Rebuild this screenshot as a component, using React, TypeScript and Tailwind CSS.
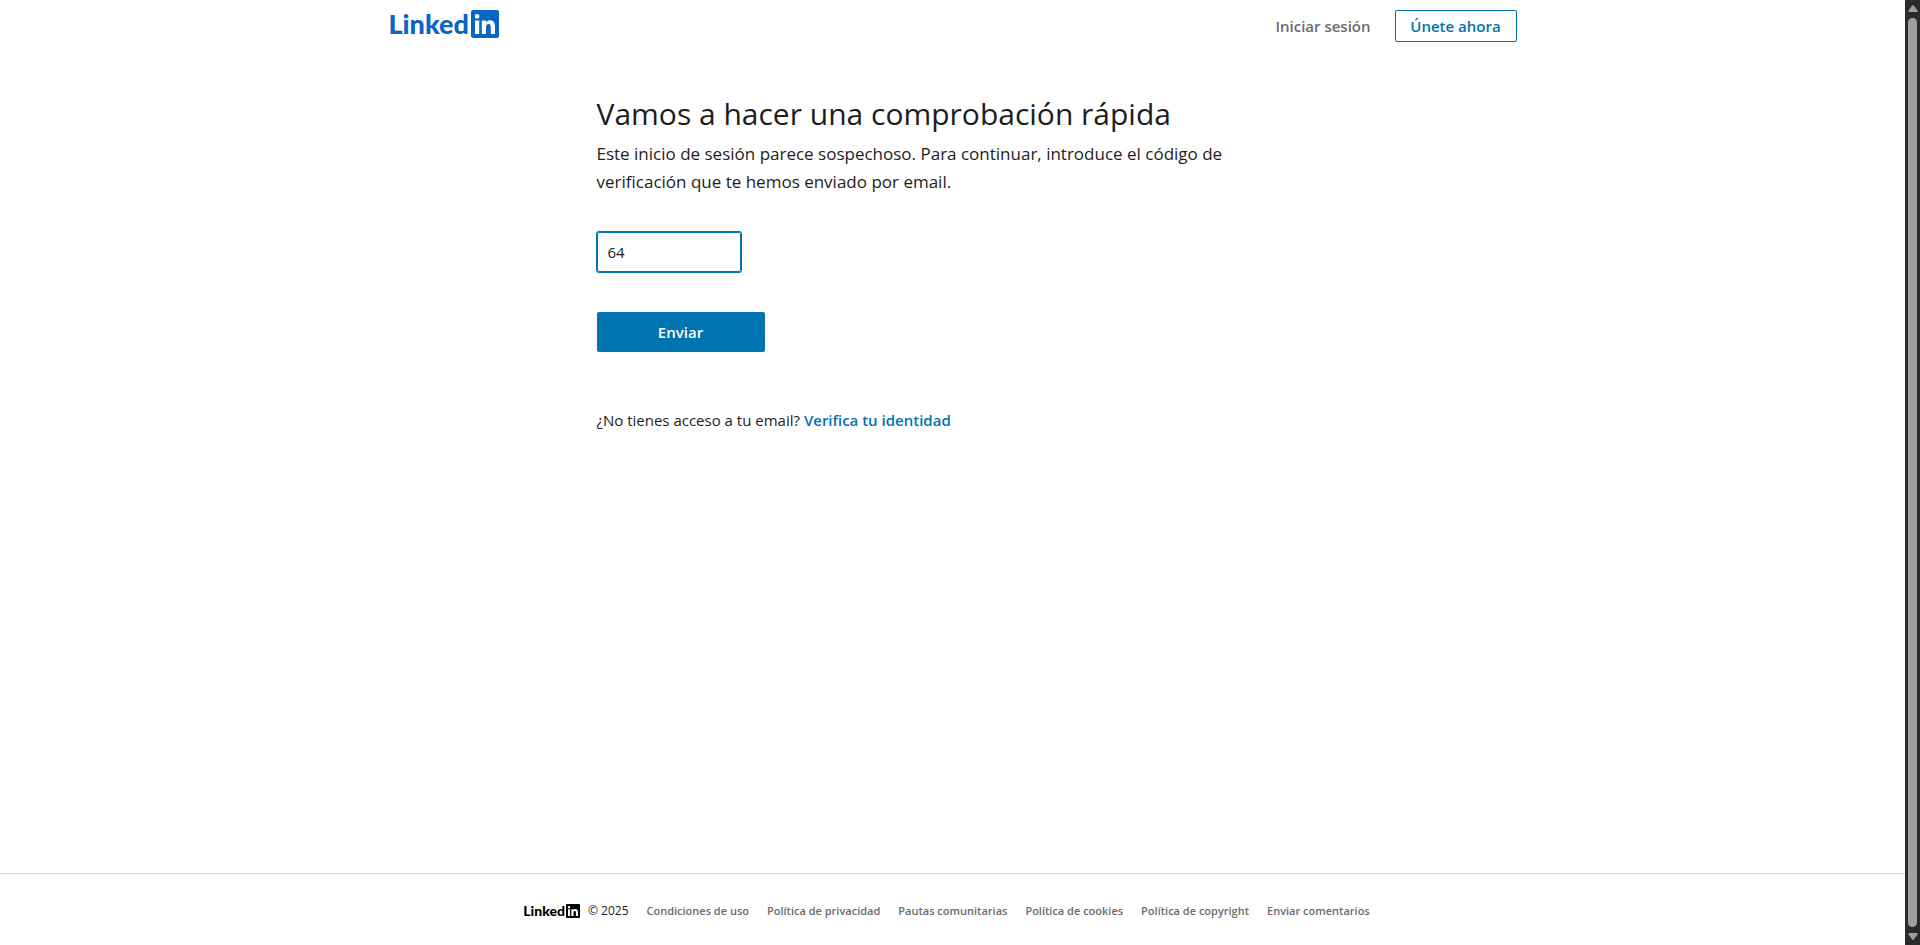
import { useState } from "react";

type LogoProps = { size: "large" | "small" };

function InMark({ className }: { className: string }) {
  return (
    <svg viewBox="0 0 28 28" className={className} aria-hidden="true">
      <path
        fill="currentColor"
        fillRule="evenodd"
        d="M2 0h24a2 2 0 0 1 2 2v24a2 2 0 0 1-2 2H2a2 2 0 0 1-2-2V2a2 2 0 0 1 2-2ZM4 10.5V24h4.2V10.5H4ZM6.1 3.9a2.4 2.4 0 1 0 0 4.8 2.4 2.4 0 0 0 0-4.8ZM10.8 10.5V24H15v-6.8c0-1.9.9-3.1 2.6-3.1 1.6 0 2.2 1.2 2.2 3.1V24H24v-7.7c0-4-2-6.1-5-6.1-2.1 0-3.3 1-4 2.1v-1.8h-4.2Z"
      />
    </svg>
  );
}

function Logo({ size }: LogoProps) {
  return size === "large" ? (
    <a href="#" className="flex h-7 items-center gap-0.5 text-[#0a66c2]">
      <span className="font-[Lato] text-[27px] leading-7 font-black">Linked</span>
      <InMark className="size-7" />
    </a>
  ) : (
    <span className="flex items-center gap-px text-black">
      <span className="font-[Lato] text-[14px] leading-4 font-black">Linked</span>
      <InMark className="size-3.5" />
    </span>
  );
}

const footerLinks = [
  "Condiciones de uso",
  "Política de privacidad",
  "Pautas comunitarias",
  "Política de cookies",
  "Política de copyright",
  "Enviar comentarios",
];

function Scrollbar() {
  return (
    <div aria-hidden="true" className="sticky top-0 flex h-screen w-[15px] shrink-0 flex-col items-center gap-1.5 bg-[#2b2b2b] py-[5px] text-[#9f9f9f]">
      <svg viewBox="0 0 10 7" className="h-[7px] w-2.5">
        <path fill="currentColor" d="M4.2.6a1 1 0 0 1 1.6 0L9.5 5.5Q10 7 8.5 7h-7Q0 7 .5 5.5Z" />
      </svg>
      <div className="w-[9px] grow rounded-full bg-[#9f9f9f]" />
      <svg viewBox="0 0 10 7" className="h-[7px] w-2.5">
        <path fill="currentColor" d="M4.2 6.4a1 1 0 0 0 1.6 0L9.5 1.5Q10 0 8.5 0h-7Q0 0 .5 1.5Z" />
      </svg>
    </div>
  );
}

export default function App() {
  const [code, setCode] = useState("64");

  return (
    <div className="flex min-h-screen bg-white font-['Open_Sans',sans-serif] text-[#1d1d1d]">
      <div className="flex min-w-0 grow flex-col">
        <header className="mx-auto flex w-full max-w-[1128px] items-start justify-between py-2.5">
          <Logo size="large" />
          <nav className="flex items-center gap-6 text-[15px] font-semibold">
            <a href="#" className="text-[#6b6b6b]">Iniciar sesión</a>
            <a href="#" className="flex h-8 w-[122px] items-center justify-center rounded-xs border border-[#0073b1] text-[#0073b1]">
              Únete ahora
            </a>
          </nav>
        </header>

        <main className="mx-auto w-full max-w-[712px] grow pt-10">
          <h1 className="text-[30px] leading-11">Vamos a hacer una comprobación rápida</h1>
          <p className="max-w-[664px] pt-1 text-[17px] leading-7">
            Este inicio de sesión parece sospechoso. Para continuar, introduce el código de verificación que te hemos
            enviado por email.
          </p>
          <form className="flex flex-col items-start gap-10 pt-9" onSubmit={(e) => e.preventDefault()}>
            <input
              aria-label="Código de verificación"
              value={code}
              onChange={(e) => setCode(e.target.value)}
              className="h-10 w-36 rounded-xs border border-[#0073b1] px-2.5 text-[15px] ring-1 ring-[#0073b1] outline-none"
            />
            <button type="submit" className="h-10 w-[168px] rounded-xs bg-[#0073b1] text-[15px] font-semibold text-white">
              Enviar
            </button>
          </form>
          <p className="pt-14 text-[15px] leading-6">
            ¿No tienes acceso a tu email?{" "}
            <a href="#" className="font-semibold text-[#0073b1]">Verifica tu identidad</a>
          </p>
        </main>

        <footer className="border-t border-[#d6d6d6] pt-[29px] pr-3 pb-[26px]">
          <div className="flex items-center justify-center gap-[18px] text-[11px] leading-4">
            <div className="flex items-center gap-2">
              <Logo size="small" />
              <span className="text-[12px]">© 2025</span>
            </div>
            {footerLinks.map((label) => (
              <a key={label} href="#" className="font-semibold text-[#6b6b6b]">{label}</a>
            ))}
          </div>
        </footer>
      </div>
      <Scrollbar />
    </div>
  );
}
